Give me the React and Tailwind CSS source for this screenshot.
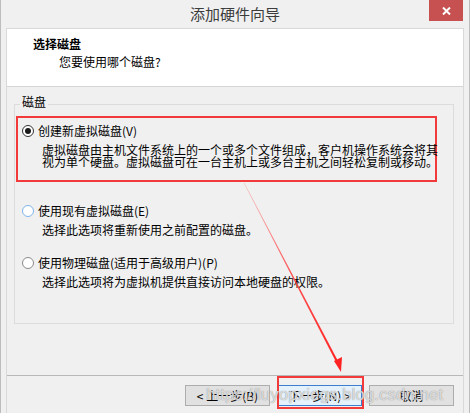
function Radio({ checked, hover }) {
  return (
    <span
      className={
        "w-[12px] h-[12px] rounded-full border bg-white flex items-center justify-center shrink-0 " +
        (hover ? "border-[#7eb4ea]" : checked ? "border-[#333333]" : "border-[#8a8a8a]")
      }
    >
      {checked && <span className="w-[6px] h-[6px] rounded-full bg-[#1a1a1a]" />}
    </span>
  )
}

function Btn({ children, focus }) {
  return (
    <button
      className={
        "w-[85px] h-[21px] border text-[12px] leading-[19px] text-black " +
        (focus ? "border-[#3c7fd1] bg-[#e5f1fb]" : "border-[#adadad] bg-[#e1e1e1]")
      }
    >
      {children}
    </button>
  )
}

export default function App() {
  const font = { fontFamily: '"Noto Sans CJK SC", "Liberation Sans", sans-serif' }
  return (
    <div
      className="relative w-[470px] h-[413px] overflow-hidden bg-[#f0f0f0] border-x border-[#bdbdbd] flex flex-col text-black"
      style={font}
    >
      {/* title bar */}
      <div className="h-[28px] flex items-center justify-center shrink-0">
        <span className="text-[15px] leading-[20px] text-[#3c3c3c] mt-[-1px]">添加硬件向导</span>
      </div>
      <div className="absolute top-0 right-[6px] w-[34px] h-[21px] bg-[#c75050] flex items-center justify-center">
        <svg width="9" height="8" viewBox="0 0 9 8">
          <path d="M1 0.5 L8 7.5 M8 0.5 L1 7.5" stroke="#fff" strokeWidth="2" />
        </svg>
      </div>

      {/* client area */}
      <div className="flex-1 mx-[5px] border-x border-t border-[#d9d9d9] flex flex-col">
        <div className="h-[58px] bg-white border-b border-[#d5d5d5] pt-[7px] pl-[26px] shrink-0">
          <div className="text-[12px] leading-[16px] font-bold">选择磁盘</div>
          <div className="text-[12px] leading-[16px] mt-[2px] pl-[26px]">您要使用哪个磁盘?</div>
        </div>

        <div className="flex-1">
          <fieldset className="mt-[7px] ml-[7px] mr-[9px] border border-[#dcdcdc] pb-[35px] text-[12px]">
            <legend className="ml-[5px] px-[2px] leading-[16px] pb-[4px]">磁盘</legend>

            <div className="mt-[2px] ml-[1px] w-[421px] h-[66px] border-2 border-[#f23a3a] pl-[4px] pt-[5px]">
              <div className="flex items-center gap-[4px] leading-[16px]">
                <Radio checked />
                <span>创建新虚拟磁盘(V)</span>
              </div>
              <div className="mt-[5px] pl-[20px] leading-[12px] whitespace-nowrap">
                <div>虚拟磁盘由主机文件系统上的一个或多个文件组成，客户机操作系统会将其</div>
                <div>视为单个硬盘。虚拟磁盘可在一台主机上或多台主机之间轻松复制或移动。</div>
              </div>
            </div>

            <div className="mt-[21px] pl-[7px] flex items-center gap-[4px] leading-[16px]">
              <Radio hover />
              <span>使用现有虚拟磁盘(E)</span>
            </div>
            <div className="mt-[5px] pl-[27px] leading-[12px]">选择此选项将重新使用之前配置的磁盘。</div>

            <div className="mt-[19px] pl-[7px] flex items-center gap-[4px] leading-[16px]">
              <Radio />
              <span>使用物理磁盘(适用于高级用户)(P)</span>
            </div>
            <div className="mt-[5px] pl-[27px] leading-[12px]">选择此选项将为虚拟机提供直接访问本地硬盘的权限。</div>
          </fieldset>
        </div>

        <div className="h-[38px] shrink-0 border-t border-[#b9b9b9] pt-[9px] pr-[9px] flex justify-end gap-[7px]">
          <Btn>&lt; 上一步(B)</Btn>
          <Btn focus>下一步(N) &gt;</Btn>
          <Btn>取消</Btn>
        </div>
      </div>

      {/* annotation overlays */}
      <div className="absolute left-[276px] top-[376px] w-[87px] h-[33px] border-2 border-[#f23a3a]" />
      <svg className="absolute left-0 top-0 pointer-events-none" width="470" height="413">
        <defs>
          <linearGradient id="g" x1="243" y1="183" x2="338" y2="370" gradientUnits="userSpaceOnUse">
            <stop offset="0" stopColor="#f55" stopOpacity="0.35" />
            <stop offset="0.5" stopColor="#f33" stopOpacity="0.85" />
            <stop offset="1" stopColor="#f22" stopOpacity="1" />
          </linearGradient>
        </defs>
        <path d="M242.8 183 L243.4 183 L338.6 364 L336.6 365 Z" fill="url(#g)" />
        <path d="M333 361 L341 357 L340 372 Z" fill="#f22" />
      </svg>
      <div className="absolute left-[205px] top-[384px] text-[17px] leading-[22px] text-white/70 [text-shadow:0_0_1px_#777] pointer-events-none whitespace-nowrap" style={{ fontFamily: '"Liberation Sans", sans-serif' }}>
        https://luyopxiegs.blog.csdn.net
      </div>
    </div>
  )
}
